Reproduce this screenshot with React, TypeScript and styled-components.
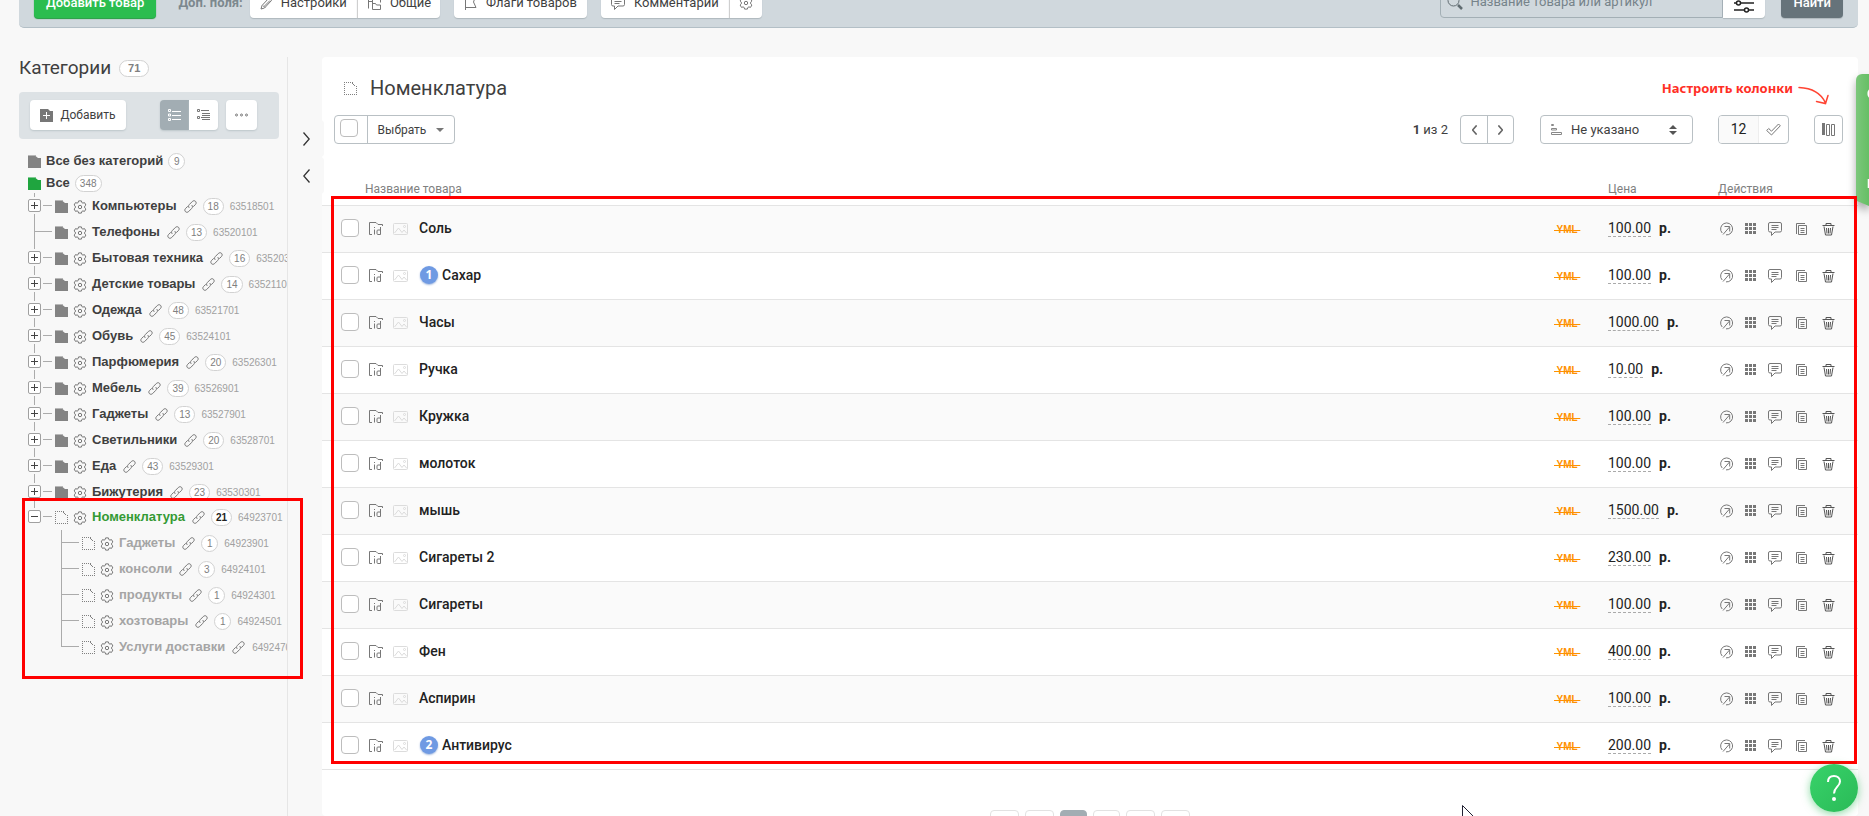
import React from "react";
import styled, { createGlobalStyle } from "styled-components";

const GlobalStyle = createGlobalStyle`
  *, *::before, *::after { box-sizing: border-box; }
  body {
    margin: 0;
    background: #f8f8f8;
    color: #3f3f3f;
    font: 14px/16px Roboto, "Liberation Sans", sans-serif;
  }
  button, input, select { font: inherit; color: inherit; margin: 0; }
  button { cursor: pointer; }
  svg { display: block; flex: none; }
`;

/* ---------- icons ---------- */

type IconProps = { color?: string };

const FolderIcon = ({ color = "#838383" }: IconProps) => (
  <svg width="13" height="13" viewBox="0 0 13 13" fill={color}>
    <path d="M0 0h8v1H0z" opacity=".55" />
    <path d="M0 1h7.5l2.5 2h3v10H0z" />
  </svg>
);

const DottedFolderIcon = () => (
  <svg width="13" height="13" viewBox="0 0 13 13" fill="none" stroke="#808080">
    <path d="M0 .5h9M.5 2v11M2 12.500h11M12.500 4v8" strokeDasharray="1 1" />
    <path d="M8.500 1v1M9.500 2v1M10 3.500h1" />
  </svg>
);

const GearIcon = ({ color = "#777" }: IconProps) => (
  <svg width="14" height="14" viewBox="0 0 14 14" fill="none" stroke={color}>
    <path d="M5.600 .9h2.800l.4 1.600 1.100.6 1.600-.5 1.400 2.400-1.200 1.100v1.800l1.200 1.100-1.400 2.400-1.600-.5-1.100.6-.4 1.600H5.600l-.4-1.600-1.100-.6-1.600.5L1.100 9l1.200-1.100V6.100L1.100 5l1.400-2.400 1.600.5 1.100-.6z" strokeLinejoin="round" />
    <circle cx="7" cy="7" r="1.700" />
  </svg>
);

const LinkIcon = () => (
  <svg width="13" height="13" viewBox="0 0 13 13" fill="none" stroke="#777" strokeLinecap="round">
    <path d="M5 7.600C4.200 6.500 4.400 5.500 5.200 4.700L8.300 1.500c1-1 2.400-1 3.200-.2.9.9.9 2.200 0 3.200L9.500 6.400" />
    <path d="M8 5.400c.8 1.100.6 2.100-.2 2.900l-3.100 3.200c-1 1-2.400 1-3.200.2-.9-.9-.9-2.200 0-3.200l2-1.900" />
  </svg>
);

const PencilIcon = () => (
  <svg width="12" height="14" viewBox="0 0 12 14" fill="none" stroke="#777">
    <path d="M1 13l1-3.500L9 2l2.500 2.500L4.500 12zM3 9.500l2 2M4 10.500l6-6" />
  </svg>
);

const SharedIcon = () => (
  <svg width="14" height="15" viewBox="0 0 14 15" fill="none" stroke="#777">
    <path d="M1.500 1v12.500M1.500 6.500H5M5.500 9.500V3.500h4l1 1h3v3M5.500 8.500h3l1 1.500h4v4.500h-8z" />
  </svg>
);

const FlagIcon = () => (
  <svg width="13" height="15" viewBox="0 0 13 15" fill="none" stroke="#777">
    <path d="M1.500 15V1.500h10l-2 5.500 2.500 5.500H1.500" />
  </svg>
);

const CommentIcon = () => (
  <svg width="14" height="14" viewBox="0 0 14 14" fill="none" stroke="#777">
    <path d="M2 .5h10q1.500 0 1.500 1.500v6.500q0 1.500-1.500 1.500H7l-3.500 3.500V10H2Q.5 10 .5 8.500V2Q.5 .5 2 .5zM3.500 3.500h7M3.500 5.500h7M3.500 7.500h5" />
  </svg>
);

const SearchIcon = () => (
  <svg width="16" height="16" viewBox="0 0 16 16" fill="none" stroke="#5f6b70">
    <circle cx="6.500" cy="6.500" r="5.500" />
    <path d="M11 11l4 4" strokeWidth="2.500" />
  </svg>
);

const SlidersIcon = () => (
  <svg width="20" height="18" viewBox="0 0 20 18" fill="none" stroke="#222" strokeWidth="1.500">
    <path d="M0 1h12M0 8h2M7 8h13M0 15h10M15 15h5" />
    <circle cx="4.500" cy="8" r="2" />
    <circle cx="12.500" cy="15" r="2" />
  </svg>
);

const FolderPlusIcon = () => (
  <svg width="13" height="13" viewBox="0 0 13 13">
    <path d="M0 0h8l2 2h3v11H0z" fill="#777" />
    <path d="M6.500 3v7M3 6.500h7" stroke="#fff" />
  </svg>
);

const FlatListIcon = () => (
  <svg width="13" height="13" viewBox="0 0 13 13" fill="none" stroke="#fff">
    <path d="M.5 .5h2v2h-2zM.5 5h2v2h-2zM.5 9.500h2v2h-2zM4 2.500h9M4 6.500h9M4 10.500h9" />
  </svg>
);

const NestedListIcon = () => (
  <svg width="13" height="13" viewBox="0 0 13 13" fill="none" stroke="#777">
    <path d="M.5 .5h2v2h-2zM.5 7.500h2v2h-2zM4 1.500h8M5 4.500h8M5 6.500h8M4 8.500h9M5 10.500h8" />
  </svg>
);

const DotsIcon = () => (
  <svg width="13" height="4" viewBox="0 0 13 4" fill="none" stroke="#777">
    <circle cx="1.500" cy="2" r="1" />
    <circle cx="6.500" cy="2" r="1" />
    <circle cx="11.500" cy="2" r="1" />
  </svg>
);

const Chevron = ({ back, color = "#333", size = 14 }: IconProps & { back?: boolean; size?: number }) => (
  <svg width={size / 2} height={size} viewBox="0 0 7 14" fill="none" stroke={color} strokeWidth={size > 10 ? 1.3 : 2.2}>
    <path d={back ? "M6.500 .5L.8 7l5.700 6.500" : "M.5 .5L6.200 7 .5 13.500"} />
  </svg>
);

const SortIcon = () => (
  <svg width="12" height="12" viewBox="0 0 12 12" fill="none" stroke="#888">
    <path d="M.5 .5h2v1h-2zM.5 4.500h5v1.500h-5zM.5 8.500h10v2h-10z" />
  </svg>
);

const UpDownIcon = () => (
  <svg width="8" height="10" viewBox="0 0 8 10" fill="#555">
    <path d="M0 4l4-4 4 4zM0 6l4 4 4-4z" />
  </svg>
);

const CheckIcon = () => (
  <svg width="15" height="13" viewBox="0 0 15 13" fill="none" stroke="#777">
    <path d="M.7 7.500l2-2L5.500 8.200 12.500 1l1.800 1.800L5.500 12z" />
  </svg>
);

const ColumnsIcon = () => (
  <svg width="13" height="13" viewBox="0 0 13 13" fill="none" stroke="#777">
    <path d="M0 0h3v12H0z" fill="#777" stroke="none" />
    <path d="M4.500 1.500h3v11h-3zM9.500 1.500h3v11h-3z" />
  </svg>
);

const IdFolderIcon = () => (
  <svg width="14" height="14" viewBox="0 0 14 14" fill="none" stroke="#777">
    <path d="M3 12.500H.5V.5H7L9 2.500h4.500V4" />
    <path d="M5.500 7.500v5M5.500 5v1M11.500 5v7.500M11.500 8H9q-1 0-1 1v2.500q0 1 1 1h2.500" />
  </svg>
);

const PictureIcon = () => (
  <svg width="15" height="12" viewBox="0 0 15 12" fill="none" stroke="#dcdcdc">
    <rect x=".5" y=".5" width="14" height="11" rx="1" />
    <path d="M1.500 10L5.500 5 9 9.500l2-2.500 3 3.500" />
    <circle cx="11.500" cy="3.500" r="1" />
  </svg>
);

const ExternalIcon = () => (
  <svg width="14" height="14" viewBox="0 0 14 14" fill="none" stroke="#777">
    <path d="M2.200 11A6 6 0 1 1 6 12.900M3 12.500L9.500 5M4.500 4.500h5.200V9.500" />
  </svg>
);

const GridIcon = () => (
  <svg width="12" height="12" viewBox="0 0 12 12" fill="#777">
    <path d="M0 0h3v3H0zM4 0h3v3H4zM8 0h3v3H8zM0 4h3v3H0zM4 4h3v3H4zM8 4h3v3H8zM0 8h3v3H0zM4 8h3v3H4zM8 8h3v3H8z" />
  </svg>
);

const CopyIcon = () => (
  <svg width="12" height="13" viewBox="0 0 12 13" fill="none" stroke="#777">
    <path d="M2.500 2.500h8v9h-8zM.5 11V.5H9M4.500 5.500h4M4.500 7.500h4M4.500 9.500h4" />
  </svg>
);

const TrashIcon = () => (
  <svg width="13" height="13" viewBox="0 0 13 13" fill="none" stroke="#555">
    <path d="M.5 2.500h12M4 2V.5h5V2M2 3.500l1.500 8.500h6L11 3.500M4.500 5l.5 5.500M6.500 5v5.500M8.500 5L8 10.500" />
  </svg>
);

const HintArrow = () => (
  <svg width="32" height="20" viewBox="0 0 32 20" fill="none" stroke="#ff4433" strokeWidth="1.500" strokeLinecap="round">
    <path d="M1 1.500C14 2 23 7 27.500 17M18.500 15.500L27.500 17.500 30 9.500" />
  </svg>
);

const PointerIcon = () => (
  <svg width="14" height="20" viewBox="0 0 14 20" fill="#fff" stroke="#223">
    <path d="M.5 .5v17l4-4 3 6 2-1-3-6h6z" />
  </svg>
);

/* ---------- page and top bar ---------- */

const Page = styled.div`
  display: flex;
  flex-direction: column;
  height: 100vh;
  overflow: hidden;
  padding: 0 11px 0 19px;
`;

const TopBar = styled.header`
  display: flex;
  flex: none;
  margin: -26px 0 29px;
  padding: 10px 15px 9px;
  border-bottom: 1px solid #b3bfc6;
  border-radius: 5px;
  background: #d0d8dd;
`;

const BarButton = styled.button<{ $tone?: "green" | "slate" }>`
  display: flex;
  align-items: center;
  gap: 9px;
  height: 34px;
  padding: 3px ${(p) => (p.$tone ? 12 : 10)}px 0;
  border: 0;
  border-radius: 4px;
  font-size: 13px;
  white-space: nowrap;
  background: ${(p) => (p.$tone === "green" ? "#2bbd4f" : p.$tone === "slate" ? "#66737a" : "#fff")};
  color: ${(p) => (p.$tone ? "#fff" : "#3f3f3f")};
  font-weight: ${(p) => (p.$tone ? 500 : 400)};
  box-shadow: 0 1px 1px ${(p) => (p.$tone === "green" ? "#1d9c3c" : "#aeb8bd")};
`;

const ButtonGroup = styled.div<{ $gap: number }>`
  display: flex;
  margin-left: ${(p) => p.$gap}px;
  & > button + button {
    border-left: 1px solid #cfcfcf;
    padding-left: 9px;
    padding-right: 9px;
  }
  & > button:not(:first-child) { border-top-left-radius: 0; border-bottom-left-radius: 0; }
  & > button:not(:last-child) { border-top-right-radius: 0; border-bottom-right-radius: 0; }
`;

const BarLabel = styled.span`
  align-self: center;
  margin-left: 22px;
  margin-right: 7px;
  padding-top: 3px;
  color: #7c888e;
  font-size: 13px;
  font-weight: 700;
`;

const SearchBox = styled.label`
  display: flex;
  align-items: center;
  gap: 5px;
  width: 283px;
  height: 34px;
  margin-left: auto;
  padding: 2px 6px 0;
  border: 1px solid #a3afb5;
  border-radius: 4px 0 0 4px;
  input {
    flex: 1;
    min-width: 0;
    border: 0;
    outline: 0;
    background: none;
    font-size: 13px;
  }
  input::placeholder { color: #76838a; opacity: 1; }
`;

const FilterButton = styled(BarButton)`
  width: 42px;
  margin-right: 16px;
  padding-left: 11px;
  border-radius: 0 4px 4px 0;
  svg { margin-top: 3px; }
`;

/* ---------- categories ---------- */

const Columns = styled.div`
  display: flex;
  flex: 1;
  min-height: 0;
`;

const Sidebar = styled.aside`
  flex: none;
  width: 269px;
  border-right: 1px solid #e6e6e6;
`;

const SideTitle = styled.div`
  display: flex;
  align-items: center;
  gap: 8px;
  height: 22px;
  margin-bottom: 13px;
  h2 {
    margin: 0;
    font-size: 19px;
    line-height: 22px;
    font-weight: 400;
  }
`;

const Badge = styled.span<{ $strong?: boolean }>`
  flex: none;
  min-width: 17px;
  height: 17px;
  padding: 0 4px;
  border: 1px solid #d2d2d2;
  border-radius: 9px;
  background: #fff;
  color: ${(p) => (p.$strong ? "#222" : "#808080")};
  font: ${(p) => (p.$strong ? 700 : 400)} 10px/15px "Liberation Sans", sans-serif;
  text-align: center;
`;

const TotalBadge = styled(Badge)`
  padding: 0 8px;
  font-size: 11px;
  font-weight: 700;
`;

const RowBadge = styled(Badge)`
  margin-right: 5px;
`;

const SideTools = styled.div`
  display: flex;
  align-items: center;
  width: 260px;
  height: 47px;
  padding: 0 22px 1px 11px;
  border-radius: 4px;
  background: #dde2e5;
  margin-bottom: 11px;
`;

const ToolButton = styled.button<{ $on?: boolean; $w?: number }>`
  display: flex;
  align-items: center;
  justify-content: center;
  gap: 7px;
  width: ${(p) => p.$w ?? 29}px;
  height: 30px;
  padding: 0;
  border: 0;
  border-radius: 4px;
  background: ${(p) => (p.$on ? "#a2adb3" : "#fff")};
  font-size: 12px;
  box-shadow: 0 1px 2px #bcc5c9;
`;

const ToolToggle = styled.div`
  display: flex;
  margin: 0 8px 0 auto;
  button:first-child { border-radius: 4px 0 0 4px; }
  button:last-child { border-radius: 0 4px 4px 0; }
`;

const TreeList = styled.ul`
  margin: 0;
  padding: 0;
  list-style: none;
`;

/* The branches start just under the root row, with their first twig touching it. */
const Branches = styled(TreeList)`
  margin-top: -1px;
`;

const TreeRow = styled.div<{ $depth?: number }>`
  display: flex;
  align-items: center;
  height: ${(p) => (p.$depth ? 26 : 22)}px;
  padding-left: ${(p) => (p.$depth === 2 ? 36 : 9)}px;
  white-space: nowrap;
`;

/* The branch line that joins a row to the row above it. */
const Twig = styled.span<{ $full?: boolean; $box?: boolean }>`
  position: relative;
  flex: none;
  width: 24px;
  height: 26px;
  margin-right: 3px;
  &::before {
    content: "";
    position: absolute;
    left: 6px;
    top: 0;
    width: 1px;
    height: ${(p) => (p.$full ? 26 : 13)}px;
    background: #ababab;
  }
  &::after {
    content: "";
    position: absolute;
    left: ${(p) => (p.$box ? 15 : 6)}px;
    right: 0;
    top: 12px;
    height: 1px;
    background: #ababab;
  }
`;

const Expander = styled.button`
  position: absolute;
  z-index: 1;
  left: 0;
  top: 6px;
  width: 13px;
  height: 13px;
  padding: 1px;
  border: 1px solid #a0a0a0;
  border-radius: 2px;
  background: #fff;
  box-shadow: 0 0 0 2px #f8f8f8;
`;

const RowGear = styled.span`
  margin: 2px 5px 0 5px;
`;

const TreeLink = styled.a<{ $state?: "active" | "empty" }>`
  color: ${(p) => (p.$state === "active" ? "#349a34" : p.$state === "empty" ? "#a5a5a5" : "#3f3f3f")};
  font: 700 13px/16px "Liberation Sans", sans-serif;
  text-decoration: none;
`;

const RootLink = styled(TreeLink)`
  margin: 0 5px;
`;

const RowLink = styled.span`
  margin: 1px 6px 0 7px;
`;

const RowId = styled.span`
  margin: 2px 0 0 1px;
  color: #a0a0a0;
  font: 10px/16px "Liberation Sans", sans-serif;
`;

const Gutter = styled.div`
  display: flex;
  flex: none;
  flex-direction: column;
  width: 34px;
  padding-top: 63px;
`;

const FoldButton = styled.button`
  display: flex;
  align-items: center;
  justify-content: center;
  flex: none;
  width: 36px;
  height: 37px;
  padding: 0;
  border: 0;
  border-radius: 0 4px 4px 0;
  background: #f8f8f8;
  z-index: 1;
`;

/* ---------- products ---------- */

const Card = styled.main`
  flex: 1;
  min-width: 0;
  padding-top: 19px;
  border-radius: 4px;
  background: #fff;
`;

const CardHead = styled.div`
  display: flex;
  align-items: center;
  height: 24px;
  margin-bottom: 15px;
  padding: 0 28px 0 22px;
  h1 {
    margin: 0 auto 0 13px;
    font-size: 20px;
    line-height: 24px;
    font-weight: 400;
  }
`;

const Hint = styled.span`
  margin-right: 5px;
  color: #ff2f26;
  font: 700 13px/18px "Noto Sans", sans-serif;
`;

const HintArrowSlot = styled.span`
  padding-top: 15px;
`;

const Controls = styled.div`
  display: flex;
  align-items: center;
  padding: 0 15px 0 12px;
`;

const Framed = styled.div<{ $gap?: number }>`
  display: flex;
  align-items: stretch;
  height: 29px;
  margin-left: ${(p) => p.$gap ?? 0}px;
  border: 1px solid #b9c0c4;
  border-radius: 4px;
  background: #fff;
  overflow: hidden;
`;

const Check = styled.input`
  appearance: none;
  display: block;
  width: 18px;
  height: 18px;
  margin: 0;
  border: 1px solid #bdbdbd;
  border-radius: 4px;
  background: #fff;
`;

const CheckSlot = styled.label`
  display: flex;
  align-items: center;
  justify-content: center;
  width: 33px;
  padding-right: 4px;
  padding-bottom: 3px;
  border-right: 1px solid #b9c0c4;
`;

const FrameButton = styled.button<{ $w: number; $line?: boolean }>`
  display: flex;
  align-items: center;
  justify-content: center;
  gap: 10px;
  width: ${(p) => p.$w}px;
  padding: 0;
  border: 0;
  border-left: ${(p) => (p.$line ? "1px solid #b9c0c4" : "0")};
  background: none;
  font-size: 12px;
`;

const Caret = styled.span`
  border: 4px solid transparent;
  border-top-color: #777;
  border-bottom-width: 0;
`;

const PageInfo = styled.span`
  margin: 0 12px 0 auto;
  font-size: 13px;
`;

const SortBox = styled(Framed)`
  position: relative;
  align-items: center;
  width: 153px;
  padding: 0 15px 0 10px;
  justify-content: space-between;
  select {
    position: absolute;
    inset: 0;
    width: 100%;
    padding: 0 0 0 30px;
    border: 0;
    appearance: none;
    background: none;
    font-size: 13px;
  }
`;

const CountInput = styled.input`
  width: 40px;
  padding: 0 0 2px;
  border: 0;
  border-right: 1px solid #eee;
  background: #fafafa;
  color: #222;
  text-align: center;
`;

const TableWrap = styled.div`
  position: relative;
`;

const Table = styled.table`
  width: 100%;
  border-spacing: 0;
  table-layout: fixed;
  th, td {
    padding: 0;
    text-align: left;
    border-bottom: 1px solid #e4e4e4;
  }
  th {
    height: 62px;
    padding-bottom: 8px;
    vertical-align: bottom;
    color: #808080;
    font-size: 12px;
    font-weight: 400;
  }
  td { height: 47px; }
  tbody tr:nth-child(odd) { background: #fafafa; }
`;

const CheckCell = styled.td`
  && { padding-left: 19px; padding-bottom: 2px; }
`;

const NameCell = styled.div`
  display: flex;
  align-items: center;
  padding-left: 4px;
  svg + svg { margin: 0 11px 0 10px; }
`;

const NameLink = styled.a`
  color: #222;
  font-weight: 500;
  text-decoration: none;
  margin-bottom: 2px;
`;

const FlagDot = styled.span`
  width: 18px;
  height: 18px;
  margin-left: 1px;
  margin-right: 4px;
  margin-bottom: 2px;
  border-radius: 9px;
  background: #6f9ae3;
  box-shadow: 0 1px 2px #9db5dd;
  color: #fff;
  font: 700 12px/18px "Noto Sans", sans-serif;
  text-align: center;
`;

const Yml = styled.s`
  color: #ff9100;
  font: 700 10px/16px "Liberation Sans", sans-serif;
  white-space: pre;
`;

const PriceCell = styled.div`
  display: flex;
  align-items: baseline;
  gap: 8px;
  margin-bottom: 1px;
  color: #222;
  button {
    padding: 0;
    border: 0;
    border-bottom: 1px dashed #aaa;
    background: none;
  }
  b { font-weight: 700; }
`;

const Actions = styled.div`
  display: grid;
  grid-template-columns: 25px 23px 28px 26px 14px;
  align-items: center;
  padding-left: 2px;
  button {
    width: 14px;
    padding: 0;
    border: 0;
    background: none;
  }
`;

const RedFrame = styled.div<{ $area: "products" | "subtree" }>`
  position: absolute;
  z-index: 2;
  pointer-events: none;
  border: 3px solid #f00;
  inset: ${(p) => (p.$area === "products" ? "52px 1px 6px 9px" : "-6px -16px -19px 3px")};
`;

const Subtree = styled.div`
  position: relative;
  margin-top: -1px;
`;

/* Long rows are cut at the sidebar's edge. */
const Clip = styled.div`
  overflow: hidden;
`;

const Pager = styled.nav`
  display: flex;
  justify-content: center;
  gap: 6px;
  margin-top: 40px;
  padding-bottom: 30px;
`;

const PagerButton = styled.button<{ $on?: boolean; $narrow?: boolean }>`
  display: flex;
  align-items: center;
  justify-content: center;
  width: ${(p) => (p.$narrow ? 27 : 29)}px;
  height: 29px;
  padding: 0;
  border: 1px solid ${(p) => (p.$on ? "#a2adb3" : "#e2e2e2")};
  border-radius: 4px;
  background: ${(p) => (p.$on ? "#a2adb3" : "#fff")};
  color: ${(p) => (p.$on ? "#fff" : "#555")};
`;

/* ---------- floating parts ---------- */

const SideTab = styled.aside`
  position: fixed;
  z-index: 1;
  top: 74px;
  right: 0;
  width: 13px;
  height: 132px;
  filter: drop-shadow(0 5px 4px #0005);
`;

const SideTabFace = styled.div`
  display: flex;
  flex-direction: column;
  justify-content: space-between;
  height: 100%;
  padding: 12px 0 14px 11px;
  overflow: hidden;
  border-radius: 6px 0 0 6px;
  background: linear-gradient(90deg, #7cc77b, #66bf65);
  clip-path: polygon(0 0, 100% 0, 100% 100%, 1px 127px, 0 124px);
  color: #fff;
  font-weight: 700;
  font-size: 12px;
`;

const HelpButton = styled.button`
  position: fixed;
  z-index: 3;
  right: 11px;
  bottom: 4px;
  display: flex;
  align-items: center;
  justify-content: center;
  width: 48px;
  height: 48px;
  padding: 0;
  border: 0;
  border-radius: 24px;
  background: linear-gradient(135deg, #38d36a, #2aba57);
  box-shadow: 0 2px 8px #2aba5788;
`;

const Pointer = styled.div`
  position: fixed;
  z-index: 3;
  right: 393px;
  bottom: -9px;
`;

/* ---------- data ---------- */

type Category = { name: string; id: string; count?: number; leaf?: boolean };

const categories: Category[] = [
  { name: "Компьютеры", count: 18, id: "63518501" },
  { name: "Телефоны", count: 13, id: "63520101", leaf: true },
  { name: "Бытовая техника", count: 16, id: "63520301" },
  { name: "Детские товары", count: 14, id: "63521101" },
  { name: "Одежда", count: 48, id: "63521701" },
  { name: "Обувь", count: 45, id: "63524101" },
  { name: "Парфюмерия", count: 20, id: "63526301" },
  { name: "Мебель", count: 39, id: "63526901" },
  { name: "Гаджеты", count: 13, id: "63527901" },
  { name: "Светильники", count: 20, id: "63528701" },
  { name: "Еда", count: 43, id: "63529301" },
  { name: "Бижутерия", count: 23, id: "63530301" },
];

const nested: Category[] = [
  { name: "Гаджеты", count: 1, id: "64923901" },
  { name: "консоли", count: 3, id: "64924101" },
  { name: "продукты", count: 1, id: "64924301" },
  { name: "хозтовары", count: 1, id: "64924501" },
  { name: "Услуги доставки", id: "64924701" },
];

const products: { name: string; price: string; flag?: number }[] = [
  { name: "Соль", price: "100.00" },
  { name: "Сахар", price: "100.00", flag: 1 },
  { name: "Часы", price: "1000.00" },
  { name: "Ручка", price: "10.00" },
  { name: "Кружка", price: "100.00" },
  { name: "молоток", price: "100.00" },
  { name: "мышь", price: "1500.00" },
  { name: "Сигареты 2", price: "230.00" },
  { name: "Сигареты", price: "100.00" },
  { name: "Фен", price: "400.00" },
  { name: "Аспирин", price: "100.00" },
  { name: "Антивирус", price: "200.00", flag: 2 },
];

/* ---------- composed parts ---------- */

type NodeProps = { item: Category; depth: number; full?: boolean; open?: boolean };

const TreeNode = ({ item, depth, full, open }: NodeProps) => {
  const box = depth === 1 && !item.leaf;
  const empty = depth === 2;
  return (
    <TreeRow $depth={depth}>
      <Twig $full={full} $box={box}>
        {box && (
          <Expander aria-label={open ? "Свернуть" : "Развернуть"}>
            <svg width="9" height="9" viewBox="0 0 9 9" stroke="#444">
              <path d={open ? "M1 4.500h7" : "M1 4.500h7M4.500 1v7"} />
            </svg>
          </Expander>
        )}
      </Twig>
      {open || empty ? <DottedFolderIcon /> : <FolderIcon />}
      <RowGear><GearIcon /></RowGear>
      <TreeLink href="#" $state={open ? "active" : empty ? "empty" : undefined}>{item.name}</TreeLink>
      <RowLink><LinkIcon /></RowLink>
      {item.count !== undefined && <RowBadge $strong={open}>{item.count}</RowBadge>}
      <RowId>{item.id}</RowId>
    </TreeRow>
  );
};

const actionIcons = [
  { label: "Открыть", icon: <ExternalIcon /> },
  { label: "Модификации", icon: <GridIcon /> },
  { label: "Комментарий", icon: <CommentIcon /> },
  { label: "Копировать", icon: <CopyIcon /> },
  { label: "Удалить", icon: <TrashIcon /> },
];

export default function App() {
  return (
    <Page>
      <GlobalStyle />
      <TopBar>
        <BarButton $tone="green">Добавить товар</BarButton>
        <BarLabel>Доп. поля:</BarLabel>
        <ButtonGroup $gap={0}>
          <BarButton><PencilIcon /> Настройки</BarButton>
          <BarButton><SharedIcon /> Общие</BarButton>
        </ButtonGroup>
        <ButtonGroup $gap={14}>
          <BarButton><FlagIcon /> Флаги товаров</BarButton>
        </ButtonGroup>
        <ButtonGroup $gap={14}>
          <BarButton><CommentIcon /> Комментарии</BarButton>
          <BarButton aria-label="Параметры"><GearIcon /></BarButton>
        </ButtonGroup>
        <SearchBox>
          <SearchIcon />
          <input type="text" placeholder="Название товара или артикул" aria-label="Поиск" />
        </SearchBox>
        <FilterButton aria-label="Фильтр"><SlidersIcon /></FilterButton>
        <BarButton $tone="slate">Найти</BarButton>
      </TopBar>

      <Columns>
        <Sidebar>
          <SideTitle>
            <h2>Категории</h2>
            <TotalBadge>71</TotalBadge>
          </SideTitle>
          <SideTools>
            <ToolButton $w={96}><FolderPlusIcon /> Добавить</ToolButton>
            <ToolToggle>
              <ToolButton $on aria-label="Список"><FlatListIcon /></ToolButton>
              <ToolButton aria-label="Дерево"><NestedListIcon /></ToolButton>
            </ToolToggle>
            <ToolButton $w={31} aria-label="Ещё"><DotsIcon /></ToolButton>
          </SideTools>
          <Clip>
            <TreeRow>
              <FolderIcon />
              <RootLink href="#">Все без категорий</RootLink>
              <Badge>9</Badge>
            </TreeRow>
            <TreeRow>
              <FolderIcon color="#1fa53f" />
              <RootLink href="#">Все</RootLink>
              <Badge>348</Badge>
            </TreeRow>
            <Branches>
              {categories.map((c) => (
                <li key={c.id}><TreeNode item={c} depth={1} full /></li>
              ))}
            </Branches>
          </Clip>
          <Subtree>
            <Clip>
              <TreeNode item={{ name: "Номенклатура", count: 21, id: "64923701" }} depth={1} open />
              <TreeList>
                {nested.map((c, i) => (
                  <li key={c.id}><TreeNode item={c} depth={2} full={i < nested.length - 1} /></li>
                ))}
              </TreeList>
            </Clip>
            <RedFrame $area="subtree" />
          </Subtree>
        </Sidebar>

        <Gutter>
          <FoldButton aria-label="Шире"><Chevron /></FoldButton>
          <FoldButton aria-label="Уже"><Chevron back /></FoldButton>
        </Gutter>

        <Card>
          <CardHead>
            <DottedFolderIcon />
            <h1>Номенклатура</h1>
            <Hint>Настроить колонки</Hint>
            <HintArrowSlot><HintArrow /></HintArrowSlot>
          </CardHead>
          <Controls>
            <Framed>
              <CheckSlot><Check type="checkbox" aria-label="Выбрать все" /></CheckSlot>
              <FrameButton $w={86}>Выбрать <Caret /></FrameButton>
            </Framed>
            <PageInfo><b>1</b> из 2</PageInfo>
            <Framed>
              <FrameButton $w={26} aria-label="Назад"><Chevron back size={10} color="#666" /></FrameButton>
              <FrameButton $w={26} $line aria-label="Вперёд"><Chevron size={10} color="#666" /></FrameButton>
            </Framed>
            <SortBox $gap={26}>
              <SortIcon />
              <UpDownIcon />
              <select aria-label="Сортировка" defaultValue="none">
                <option value="none">Не указано</option>
              </select>
            </SortBox>
            <Framed $gap={25}>
              <CountInput defaultValue="12" aria-label="Товаров на странице" />
              <FrameButton $w={29} aria-label="Применить"><CheckIcon /></FrameButton>
            </Framed>
            <Framed $gap={25}>
              <FrameButton $w={27} aria-label="Колонки"><ColumnsIcon /></FrameButton>
            </Framed>
          </Controls>

          <TableWrap>
            <Table>
              <colgroup>
                <col style={{ width: 43 }} />
                <col />
                <col style={{ width: 54 }} />
                <col style={{ width: 110 }} />
                <col style={{ width: 140 }} />
              </colgroup>
              <thead>
                <tr>
                  <th />
                  <th>Название товара</th>
                  <th />
                  <th>Цена</th>
                  <th>Действия</th>
                </tr>
              </thead>
              <tbody>
                {products.map((p) => (
                  <tr key={p.name}>
                    <CheckCell><Check type="checkbox" aria-label={p.name} /></CheckCell>
                    <td>
                      <NameCell>
                        <IdFolderIcon />
                        <PictureIcon />
                        {p.flag && <FlagDot>{p.flag}</FlagDot>}
                        <NameLink href="#">{p.name}</NameLink>
                      </NameCell>
                    </td>
                    <td><Yml>{" YML "}</Yml></td>
                    <td>
                      <PriceCell>
                        <button>{p.price}</button>
                        <b>р.</b>
                      </PriceCell>
                    </td>
                    <td>
                      <Actions>
                        {actionIcons.map((a) => (
                          <button key={a.label} aria-label={a.label}>{a.icon}</button>
                        ))}
                      </Actions>
                    </td>
                  </tr>
                ))}
              </tbody>
            </Table>
            <RedFrame $area="products" />
          </TableWrap>

          <Pager aria-label="Страницы">
            <PagerButton aria-label="В начало"><Chevron back size={10} /></PagerButton>
            <PagerButton aria-label="Назад"><Chevron back size={10} /></PagerButton>
            <PagerButton $on $narrow>1</PagerButton>
            <PagerButton $narrow>2</PagerButton>
            <PagerButton aria-label="Вперёд"><Chevron size={10} /></PagerButton>
            <PagerButton aria-label="В конец"><Chevron size={10} /></PagerButton>
          </Pager>
        </Card>
      </Columns>

      <SideTab>
        <SideTabFace>
          <span>С</span>
          <span>П</span>
        </SideTabFace>
      </SideTab>
      <HelpButton aria-label="Помощь">
        <svg width="16" height="28" viewBox="0 0 16 28" fill="none" stroke="#fff" strokeWidth="2">
          <path d="M2 8C2 4 4.500 2 8 2s6 2.300 6 5.500c0 5-6 5.500-6 12" />
          <circle cx="8" cy="25" r="2" fill="#fff" stroke="none" />
        </svg>
      </HelpButton>
      <Pointer><PointerIcon /></Pointer>
    </Page>
  );
}
